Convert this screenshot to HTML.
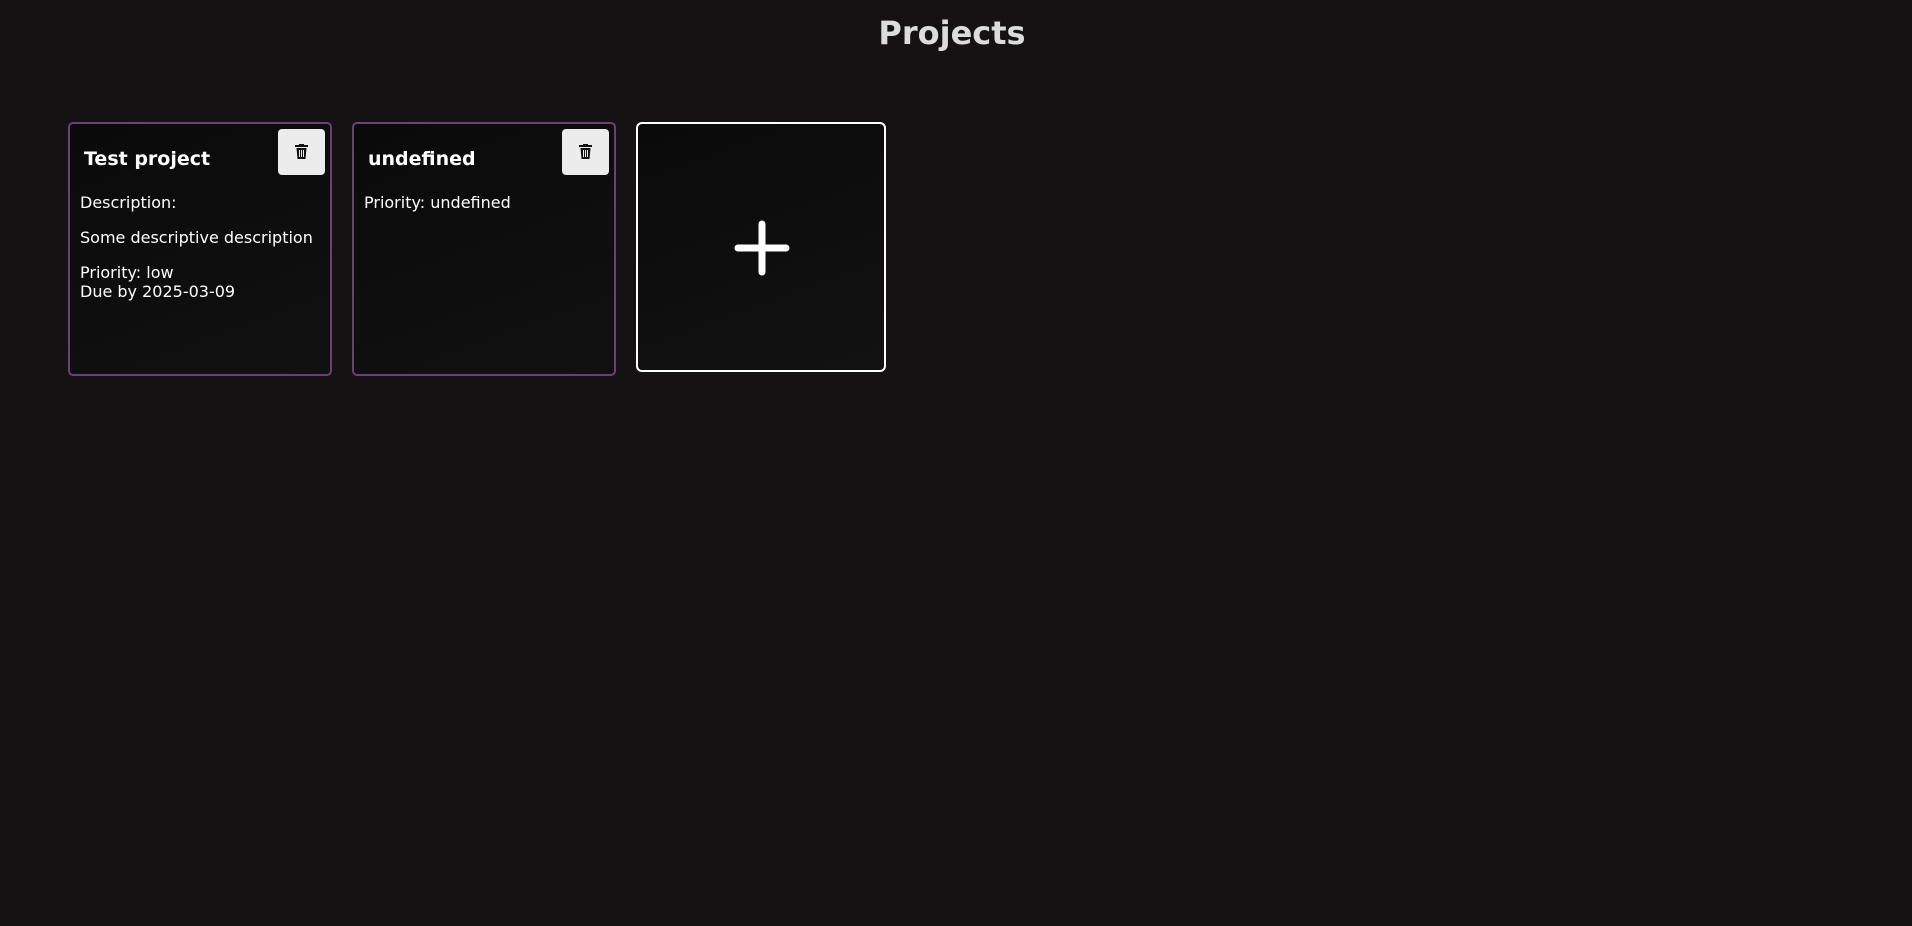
<!DOCTYPE html>
<html><head><style>
html,body{margin:0;padding:0;background:#141213;width:1912px;height:926px;overflow:hidden;font-family:"DejaVu Sans","Liberation Sans",sans-serif;color:#fff}
h1{position:absolute;left:0;width:1904px;top:14px;margin:0;text-align:center;font-size:32px;font-weight:bold;color:#dcdcdc}
.card{position:absolute;top:122px;width:260px;height:250px;border:2px solid #6a3f7a;border-radius:5px;background:linear-gradient(160deg,#0a0a0a,#111);box-sizing:content-box}
.btn{position:absolute;left:208px;top:5px;width:47px;height:46px;background:#ececec;border-radius:4px}
.btn svg{position:absolute;left:17px;top:15px}
.t{position:absolute;left:14px;top:24px;font-size:19px;font-weight:bold}
.p{position:absolute;left:10px;font-size:16px;line-height:19px;white-space:nowrap}
.add{position:absolute;left:636px;top:122px;width:246px;height:246px;border:2px solid #fff;border-radius:6px;background:linear-gradient(160deg,#0a0a0a,#121212)}
</style></head><body>
<h1>Projects</h1>
<div class="card" style="left:68px">
<div class="btn"><svg width="13" height="15" viewBox="0 0 13 15"><rect x="0" y="1" width="13" height="2" fill="#111"/><rect x="4" y="0" width="5" height="2" fill="#111"/><path d="M1.5 4h10l-1 11h-8z" fill="#111"/><rect x="4" y="6" width="1" height="7" fill="#ececec"/><rect x="6" y="6" width="1" height="7" fill="#ececec"/><rect x="8" y="6" width="1" height="7" fill="#ececec"/></svg></div>
<div class="t">Test project</div>
<div class="p" style="top:69px">Description:</div>
<div class="p" style="top:104px">Some descriptive description</div>
<div class="p" style="top:139px">Priority: low<br>Due by 2025-03-09</div>
</div>
<div class="card" style="left:352px">
<div class="btn"><svg width="13" height="15" viewBox="0 0 13 15"><rect x="0" y="1" width="13" height="2" fill="#111"/><rect x="4" y="0" width="5" height="2" fill="#111"/><path d="M1.5 4h10l-1 11h-8z" fill="#111"/><rect x="4" y="6" width="1" height="7" fill="#ececec"/><rect x="6" y="6" width="1" height="7" fill="#ececec"/><rect x="8" y="6" width="1" height="7" fill="#ececec"/></svg></div>
<div class="t">undefined</div>
<div class="p" style="top:69px">Priority: undefined</div>
</div>
<div class="add"><svg style="position:absolute;left:96px;top:96px" width="56" height="56" viewBox="0 0 56 56"><path d="M28 4V52M4 28H52" stroke="#fff" stroke-width="7" stroke-linecap="round"/></svg></div>
</body></html>
